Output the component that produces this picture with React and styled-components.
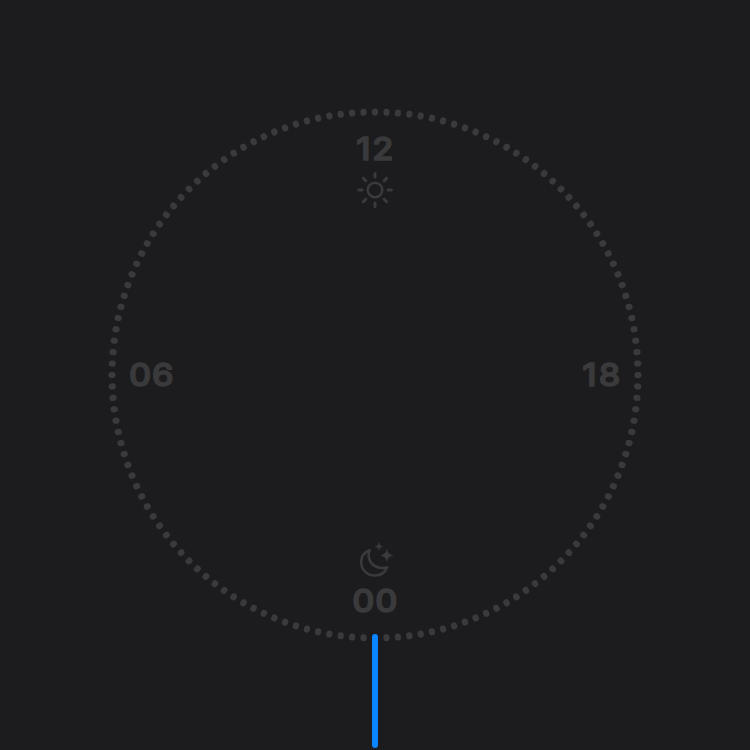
import React from "react";
import styled, { createGlobalStyle } from "styled-components";

const GlobalStyle = createGlobalStyle`
  body { margin: 0; background: #1c1c1e; }
`;

const Screen = styled.main`
  position: relative;
  width: 750px;
  height: 750px;
  overflow: hidden;
  display: grid;
  place-items: center;
  background: #1c1c1e;
  color: #3a3a3c;
`;

const Ring = styled.svg`
  grid-area: 1 / 1;
  width: 750px;
  height: 750px;
`;

const Face = styled.div`
  grid-area: 1 / 1;
  width: 492px;
  height: 478px;
  display: grid;
  grid-template: 72px 1fr 72px / 1fr 1fr;
  align-items: center;
`;

const Pole = styled.div`
  grid-column: 1 / 3;
  height: 72px;
  display: flex;
  flex-direction: column;
  align-items: center;
  justify-content: space-between;
`;

const HourLabel = styled.svg`
  width: 46px;
  height: 26px;
  overflow: visible;
  justify-self: ${(p) => p.$side || "center"};

  text {
    font-family: Inter, sans-serif;
    font-size: 31.5px;
    font-weight: 500;
    letter-spacing: ${(p) => p.$spacing}px;
    fill: currentColor;
    stroke: currentColor;
    stroke-width: 1.5px;
    stroke-linejoin: round;
  }
`;

const Icon = styled.svg`
  width: 36px;
  height: 36px;
  fill: none;
  stroke: currentColor;
  stroke-width: 2.5;
  stroke-linecap: round;
  stroke-linejoin: round;
`;

const Hand = styled.div`
  position: absolute;
  left: 372px;
  top: 634.3px;
  width: 6px;
  height: 114px;
  border-radius: 3px;
  background: #0a84ff;
`;

const ticks = Array.from({ length: 144 }, (_, i) => i * 2.5);
const rays = Array.from({ length: 8 }, (_, i) => i * 45);

function Hour({ children, side, spacing = 0.6, x = 22.8 }) {
  return (
    <HourLabel viewBox="0 0 46 26" $side={side} $spacing={spacing}>
      <text x={spacing / 2} y="0" textAnchor="middle" transform={`translate(${x} 24.2) scale(1.09 1)`}>{children}</text>
    </HourLabel>
  );
}

export default function App() {
  return (
    <>
      <GlobalStyle />
      <Screen>
        <Ring viewBox="0 0 750 750">
          {ticks.filter((a) => a !== 180).map((a) => (
            <rect key={a} x="371.9" y="108.4" width="6.2" height="7.2" rx="3.1" fill="#3a3a3c" transform={`rotate(${a} 375 375)`} />
          ))}
        </Ring>
        <Face>
          <Pole>
            <Hour spacing={1.5}>12</Hour>
            <Icon viewBox="0 0 36 36">
              <circle cx="18" cy="18" r="7.3" />
              {rays.map((a) => (
                <path key={a} d="M18 1.6V5" strokeWidth="3" transform={`rotate(${a} 18 18)`} />
              ))}
            </Icon>
          </Pole>
          <Hour side="start" x={22.3}>06</Hour>
          <Hour side="end" spacing={2.2} x={26.3}>18</Hour>
          <Pole>
            <Icon viewBox="0 0 36 36">
              <path d="M12.7 8.2C7.3 10.1 4.2 14.7 4.2 20C4.2 27.6 10 33.5 17.6 33.5C23.4 33.5 28.2 30.2 30.1 25.2C27.8 26 25.4 26.1 23 25.7C16.2 24.8 11.8 19.8 11.6 13.4C11.6 11.5 12 9.7 12.7 8.2Z" />
              <path d="M22 .6Q22.4 4.1 26 4.5Q22.4 4.9 22 8.4Q21.6 4.9 18 4.5Q21.6 4.1 22 .6ZM29.8 7.4Q30.7 12.4 36 13.4Q30.7 14.4 29.8 19.4Q28.9 14.4 23.6 13.4Q28.9 12.4 29.8 7.4Z" fill="currentColor" strokeWidth=".4" />
            </Icon>
            <Hour>00</Hour>
          </Pole>
        </Face>
        <Hand />
      </Screen>
    </>
  );
}
